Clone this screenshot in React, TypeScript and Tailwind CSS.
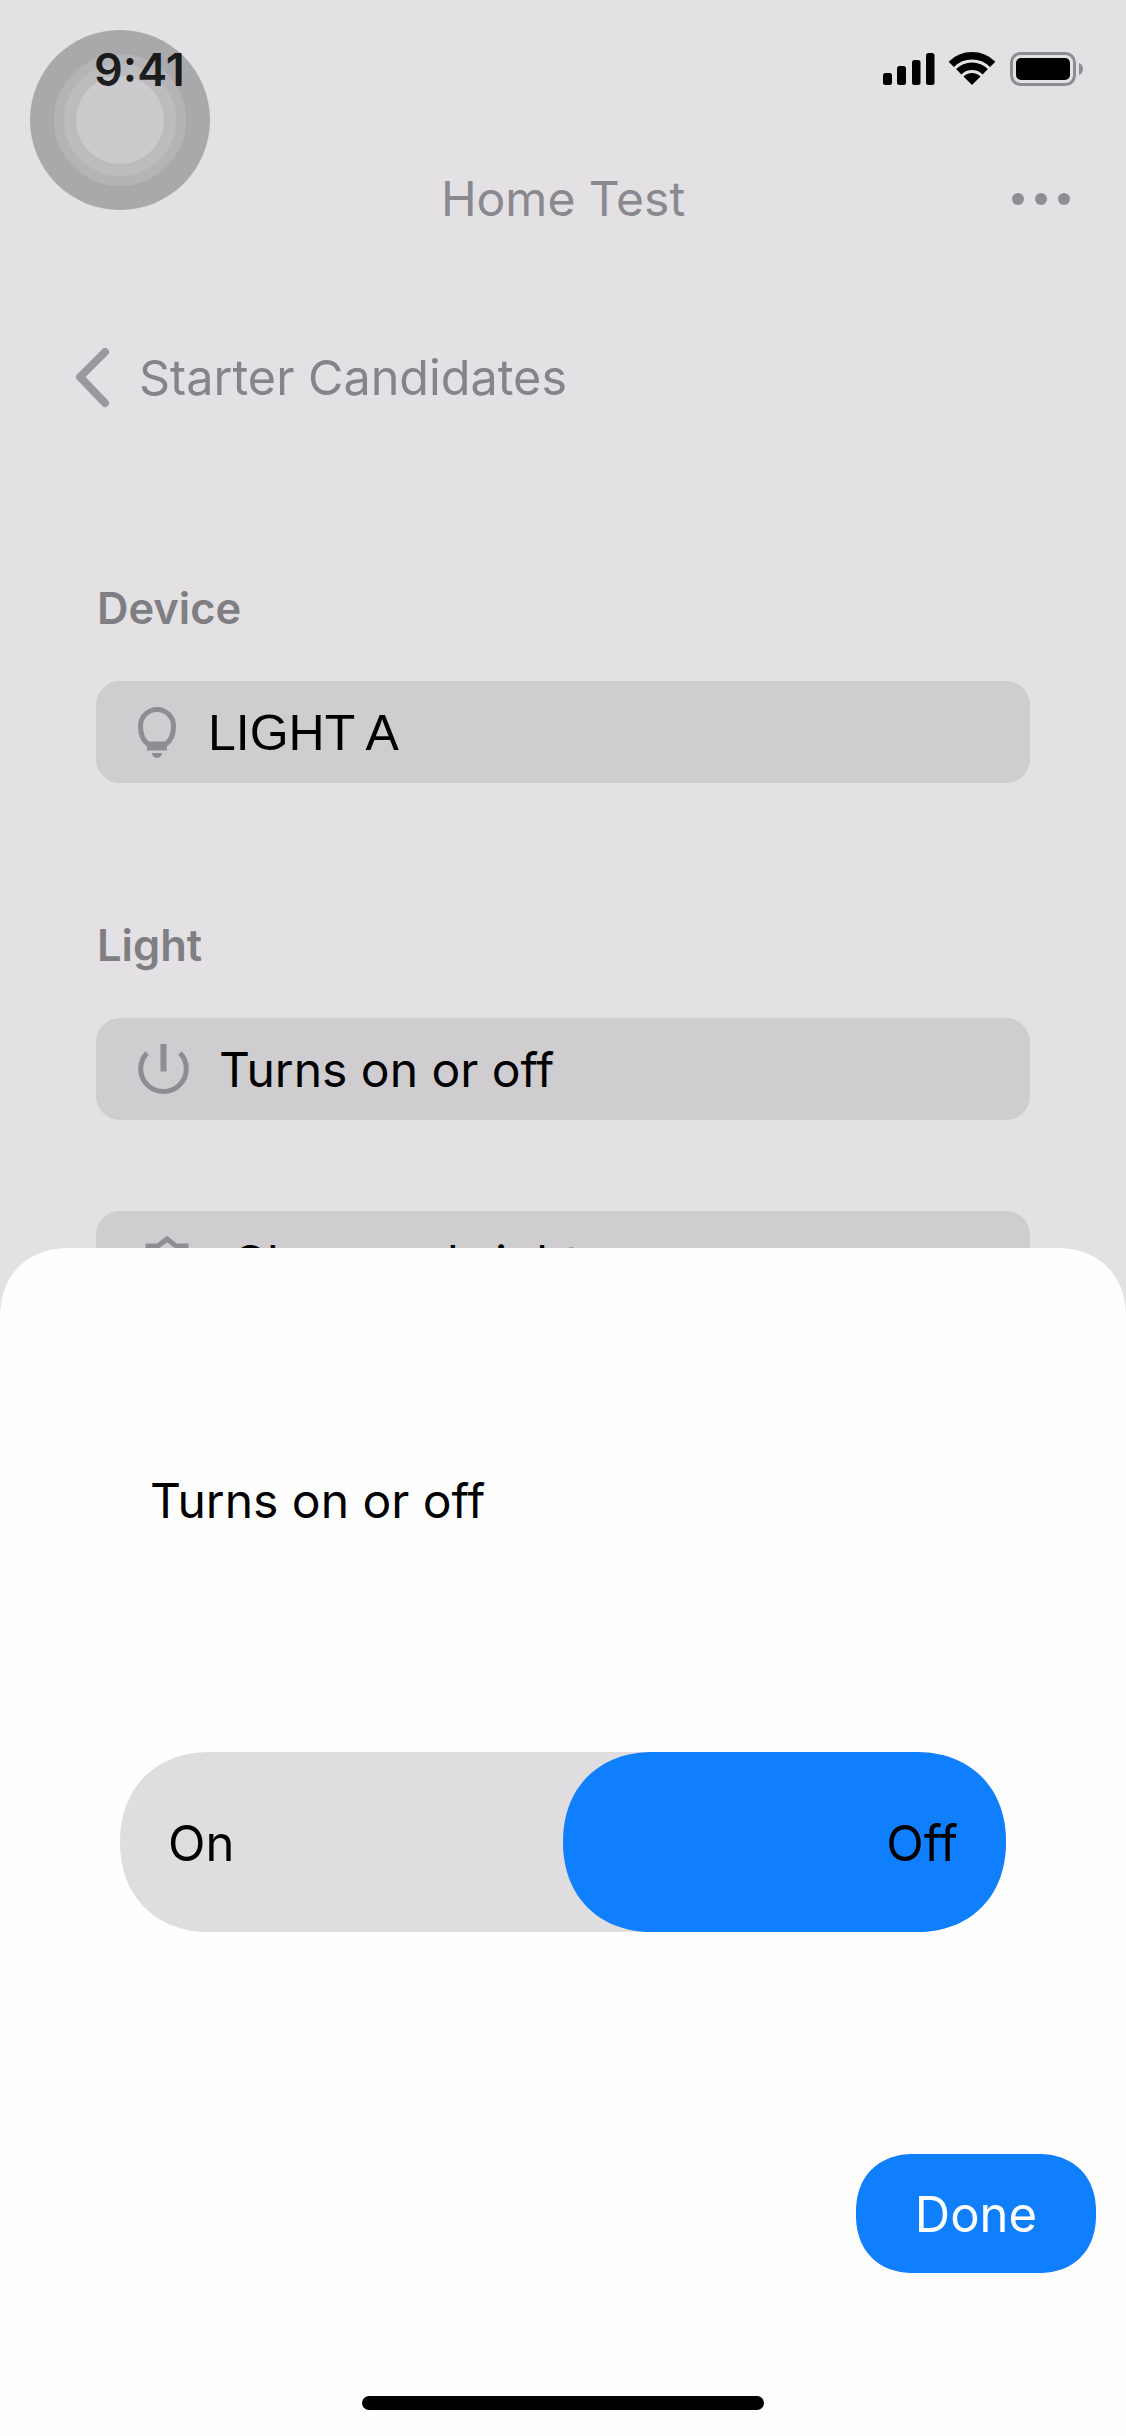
const Status = () => (
  <svg width="200" height="38" viewBox="883 50 200 38" className="block">
    <rect x="883" y="73" width="9" height="12" rx="2.5" fill="#000" />
    <rect x="897" y="66" width="9" height="19" rx="2.5" fill="#000" />
    <rect x="912" y="60" width="8.5" height="25" rx="2.5" fill="#000" />
    <rect x="926" y="53" width="8.5" height="32" rx="2.5" fill="#000" />
    <path d="M951.3 64.3A29.25 29.25 0 0 1 992.7 64.3" fill="none" stroke="#000" strokeWidth="7.5" />
    <path d="M958.74 71.74A18.75 18.75 0 0 1 985.26 71.74" fill="none" stroke="#000" strokeWidth="7.5" />
    <path d="M972 85L963.5 76.5A12 12 0 0 1 980.5 76.5Z" fill="#000" />
    <rect x="1011.5" y="53.5" width="63" height="31" rx="9" fill="none" stroke="#8e8d91" strokeWidth="3" />
    <rect x="1016" y="58" width="54" height="22" rx="5" fill="#000" />
    <path d="M1079 63C1082 64 1083 66.5 1083 69C1083 71.5 1082 74 1079 75Z" fill="#8e8d91" />
  </svg>
);

const Bulb = () => (
  <svg width="38" height="51" viewBox="0 0 38 51" className="block shrink-0">
    <path d="M10 37C5 33.5 2.5 28 2.5 19A16.5 16.5 0 0 1 35.5 19C35.5 28 33 33.500 28 37Z" fill="none" stroke="#8e8d91" strokeWidth="5" />
    <rect x="9" y="39" width="20" height="4.500" fill="#8e8d91" />
    <path d="M14 46H24A5 5 0 0 1 14 46Z" fill="#8e8d91" />
  </svg>
);

const Power = () => (
  <svg width="51" height="51" viewBox="0 0 51 51" className="block shrink-0">
    <path d="M9 9A22.800 22.800 0 1 0 42 9" fill="none" stroke="#8e8d91" strokeWidth="5" />
    <path d="M25.500 0V27.500" fill="none" stroke="#8e8d91" strokeWidth="6" />
  </svg>
);

const Brightness = () => (
  <svg width="44" height="52" viewBox="0 0 44 52" className="block shrink-0">
    <path d="M22 3L31 10H41V22L42 26L41 30V42H31L22 49L13 42H3V30L2 26L3 22V10H13Z" fill="none" stroke="#8e8d91" strokeWidth="5" />
  </svg>
);

const rowClass = "flex h-[102px] items-center rounded-[24px] bg-[#cfcdd0] text-[48px] leading-none text-black";

export default function App() {
  return (
    <div className="relative h-[2436px] w-[1126px] overflow-hidden bg-[#e3e1e4] font-['Inter',sans-serif]">
      <div className="absolute left-[30px] top-[30px] flex h-[180px] w-[180px] items-center justify-center rounded-full bg-[#a9a8ab]">
        <div className="flex h-[132px] w-[132px] items-center justify-center rounded-full bg-[#b4b3b6]">
          <div className="flex h-[112px] w-[112px] items-center justify-center rounded-full bg-[#bcbbbe]">
            <div className="h-[88px] w-[88px] rounded-full bg-[#cbcacd]" />
          </div>
        </div>
      </div>

      <div className="relative flex h-[138px] items-center justify-between pl-[94px] pr-[43px]">
        <span className="text-[45px] font-semibold leading-none text-black/85">9:41</span>
        <Status />
      </div>

      <div className="relative grid h-[122px] grid-cols-[1fr_auto_1fr] items-center">
        <div />
        <span className="text-[48px] leading-none text-[#8a898d]">Home Test</span>
        <div className="flex justify-end gap-[11px] pr-[56px]">
          <span className="h-[12px] w-[12px] rounded-full bg-[#8e8d91]" />
          <span className="h-[12px] w-[12px] rounded-full bg-[#8e8d91]" />
          <span className="h-[12px] w-[12px] rounded-full bg-[#8e8d91]" />
        </div>
      </div>

      <div className="flex h-[236px] items-center pl-[74px]">
        <svg width="38" height="60" viewBox="0 0 38 60" className="block shrink-0">
          <path d="M31 4L6 29L31 55" fill="none" stroke="#9a999d" strokeWidth="8" strokeLinecap="round" strokeLinejoin="round" />
        </svg>
        <span className="ml-[27px] text-[48.5px] leading-none text-[#858488]">Starter Candidates</span>
      </div>

      <div className="flex flex-col px-[96px]">
        <div className="mt-[83px] flex h-[60px] items-center pl-[1px] text-[43.5px] font-semibold leading-none text-[#7f7e82]">Device</div>
        <div className={`${rowClass} mt-[42px] pl-[42px]`}>
          <Bulb />
          <span className="ml-[32px] pt-[2px] text-[50px] font-['Liberation_Sans',sans-serif]">LIGHT A</span>
        </div>
        <div className="mt-[133px] flex h-[60px] items-center pl-[1px] text-[43.5px] font-semibold leading-none text-[#7f7e82]">Light</div>
        <div className={`${rowClass} mt-[42px] pl-[42px]`}>
          <Power />
          <span className="ml-[30px] pt-[2px]">Turns on or off</span>
        </div>
        <div className={`${rowClass} mt-[91px] pl-[49px]`}>
          <Brightness />
          <span className="ml-[43px] pt-[2px]">Changes brightness</span>
        </div>
      </div>

      <div className="absolute bottom-0 left-0 right-0 flex h-[1188px] flex-col rounded-t-[70px] bg-[#fefefe] [corner-shape:superellipse(1.15)]">
        <div className="mt-[222px] flex h-[60px] items-center pl-[150px] pt-[2px] text-[48px] leading-none text-black">Turns on or off</div>
        <div className="mx-[120px] mt-[222px] flex h-[180px] rounded-full bg-[#dfdde0] text-[49px] leading-none text-black [corner-shape:superellipse(1.12)]">
          <div className="flex flex-1 items-center pl-[48px] pt-[2px]">On</div>
          <div className="flex w-[443px] items-center justify-end rounded-full bg-[#0f7ffd] pr-[48px] pt-[2px] [corner-shape:superellipse(1.12)]">Off</div>
        </div>
        <div className="mt-[222px] flex justify-end pr-[30px]">
          <div className="flex h-[119px] w-[240px] items-center justify-center rounded-[58px] bg-[#0f7ffd] pt-[2px] text-[49px] leading-none text-white [corner-shape:superellipse(1.15)]">Done</div>
        </div>
        <div className="mx-auto mt-[123px] h-[14px] w-[402px] rounded-full bg-black" />
      </div>
    </div>
  );
}
